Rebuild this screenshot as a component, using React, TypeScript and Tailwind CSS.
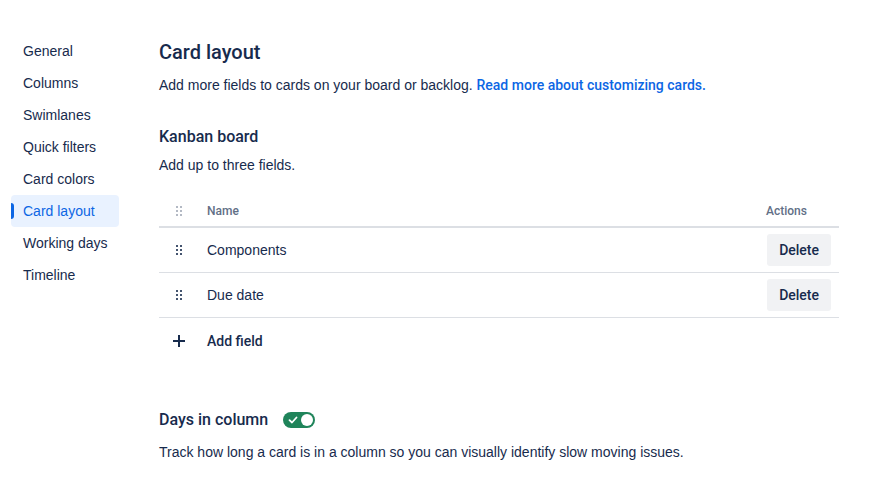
const NAV = ['General', 'Columns', 'Swimlanes', 'Quick filters', 'Card colors', 'Card layout', 'Working days', 'Timeline']

const FIELDS = ['Components', 'Due date']

// Medium weight text: Liberation has no 500, so use Roboto for it
const MEDIUM = 'font-[Roboto,sans-serif] font-medium'

function DragHandle({ light }: { light?: boolean }) {
  return (
    <svg width="6" height="10" viewBox="0 0 6 10" className={light ? 'text-[#b3b9c4]' : 'text-[#44546f]'} fill="currentColor">
      <rect x="0" y="0" width="2" height="2" />
      <rect x="4" y="0" width="2" height="2" />
      <rect x="0" y="4" width="2" height="2" />
      <rect x="4" y="4" width="2" height="2" />
      <rect x="0" y="8" width="2" height="2" />
      <rect x="4" y="8" width="2" height="2" />
    </svg>
  )
}

export default function App() {
  return (
    <div
      className="flex w-[891px] h-[482px] bg-white text-[#172b4d] overflow-hidden"
      style={{ fontFamily: '"Liberation Sans", Arial, sans-serif' }}
    >
      {/* Sidebar */}
      <nav className="ml-[11px] mt-[35px] w-[108px] flex flex-col">
        {NAV.map(item => {
          const active = item === 'Card layout'
          return (
            <div
              key={item}
              className={
                'relative h-8 flex items-center pl-3 rounded text-sm ' +
                (active ? 'bg-[#e9f2ff] text-[#0c66e4]' : 'text-[#172b4d]')
              }
            >
              {active && <span className="absolute left-0 top-2 w-[3px] h-4 rounded-r bg-[#0c66e4]" />}
              {item}
            </div>
          )
        })}
      </nav>

      {/* Main */}
      <main className="ml-10 w-[680px] pt-[38px]">
        <h1 className={`text-[20px] leading-7 ${MEDIUM}`}>Card layout</h1>
        <p className="mt-[9px] text-sm leading-5">
          Add more fields to cards on your board or backlog.{' '}
          <a className={`text-[#0c66e4] ${MEDIUM}`}>Read more about customizing cards.</a>
        </p>

        <h2 className={`mt-8 text-base leading-5 ${MEDIUM}`}>Kanban board</h2>
        <p className="mt-2 text-sm leading-5">Add up to three fields.</p>

        {/* Table */}
        <div className="mt-[21px]">
          <div className={`flex items-center h-8 border-b-2 border-[#dcdfe4] text-xs text-[#626f86] ${MEDIUM}`}>
            <div className="w-12 pl-[17px] flex"><DragHandle light /></div>
            <div className="flex-1">Name</div>
            <div className="w-[73px]">Actions</div>
          </div>
          {FIELDS.map(f => (
            <div key={f} className="flex items-center h-[45px] border-b border-[#dcdfe4] text-sm">
              <div className="w-12 pl-[17px] flex"><DragHandle /></div>
              <div className="flex-1">{f}</div>
              <button className={`mr-2 h-8 px-3 rounded-[3px] bg-[#f1f2f4] text-sm text-[#172b4d] ${MEDIUM}`}>Delete</button>
            </div>
          ))}
          <div className={`flex items-center h-[46px] text-sm ${MEDIUM}`}>
            <div className="w-12 pl-[14px] flex">
              <svg width="12" height="12" viewBox="0 0 12 12" stroke="currentColor" strokeWidth="2">
                <line x1="6" y1="0" x2="6" y2="12" />
                <line x1="0" y1="6" x2="12" y2="6" />
              </svg>
            </div>
            Add field
          </div>
        </div>

        {/* Days in column */}
        <div className="mt-[44px] flex items-center gap-[15px] h-6">
          <h2 className={`text-base ${MEDIUM}`}>Days in column</h2>
          <div className="relative w-8 h-4 rounded-full bg-[#1f845a] flex items-center">
            <svg width="10" height="10" viewBox="0 0 10 10" className="ml-[5px]" fill="none" stroke="white" strokeWidth="1.8" strokeLinecap="round" strokeLinejoin="round">
              <path d="M1.5 5.2 L4 7.5 L8.5 2.5" />
            </svg>
            <span className="absolute right-[2px] top-[2px] w-3 h-3 rounded-full bg-white" />
          </div>
        </div>
        <p className="mt-[10px] text-sm leading-5">
          Track how long a card is in a column so you can visually identify slow moving issues.
        </p>
      </main>
    </div>
  )
}
